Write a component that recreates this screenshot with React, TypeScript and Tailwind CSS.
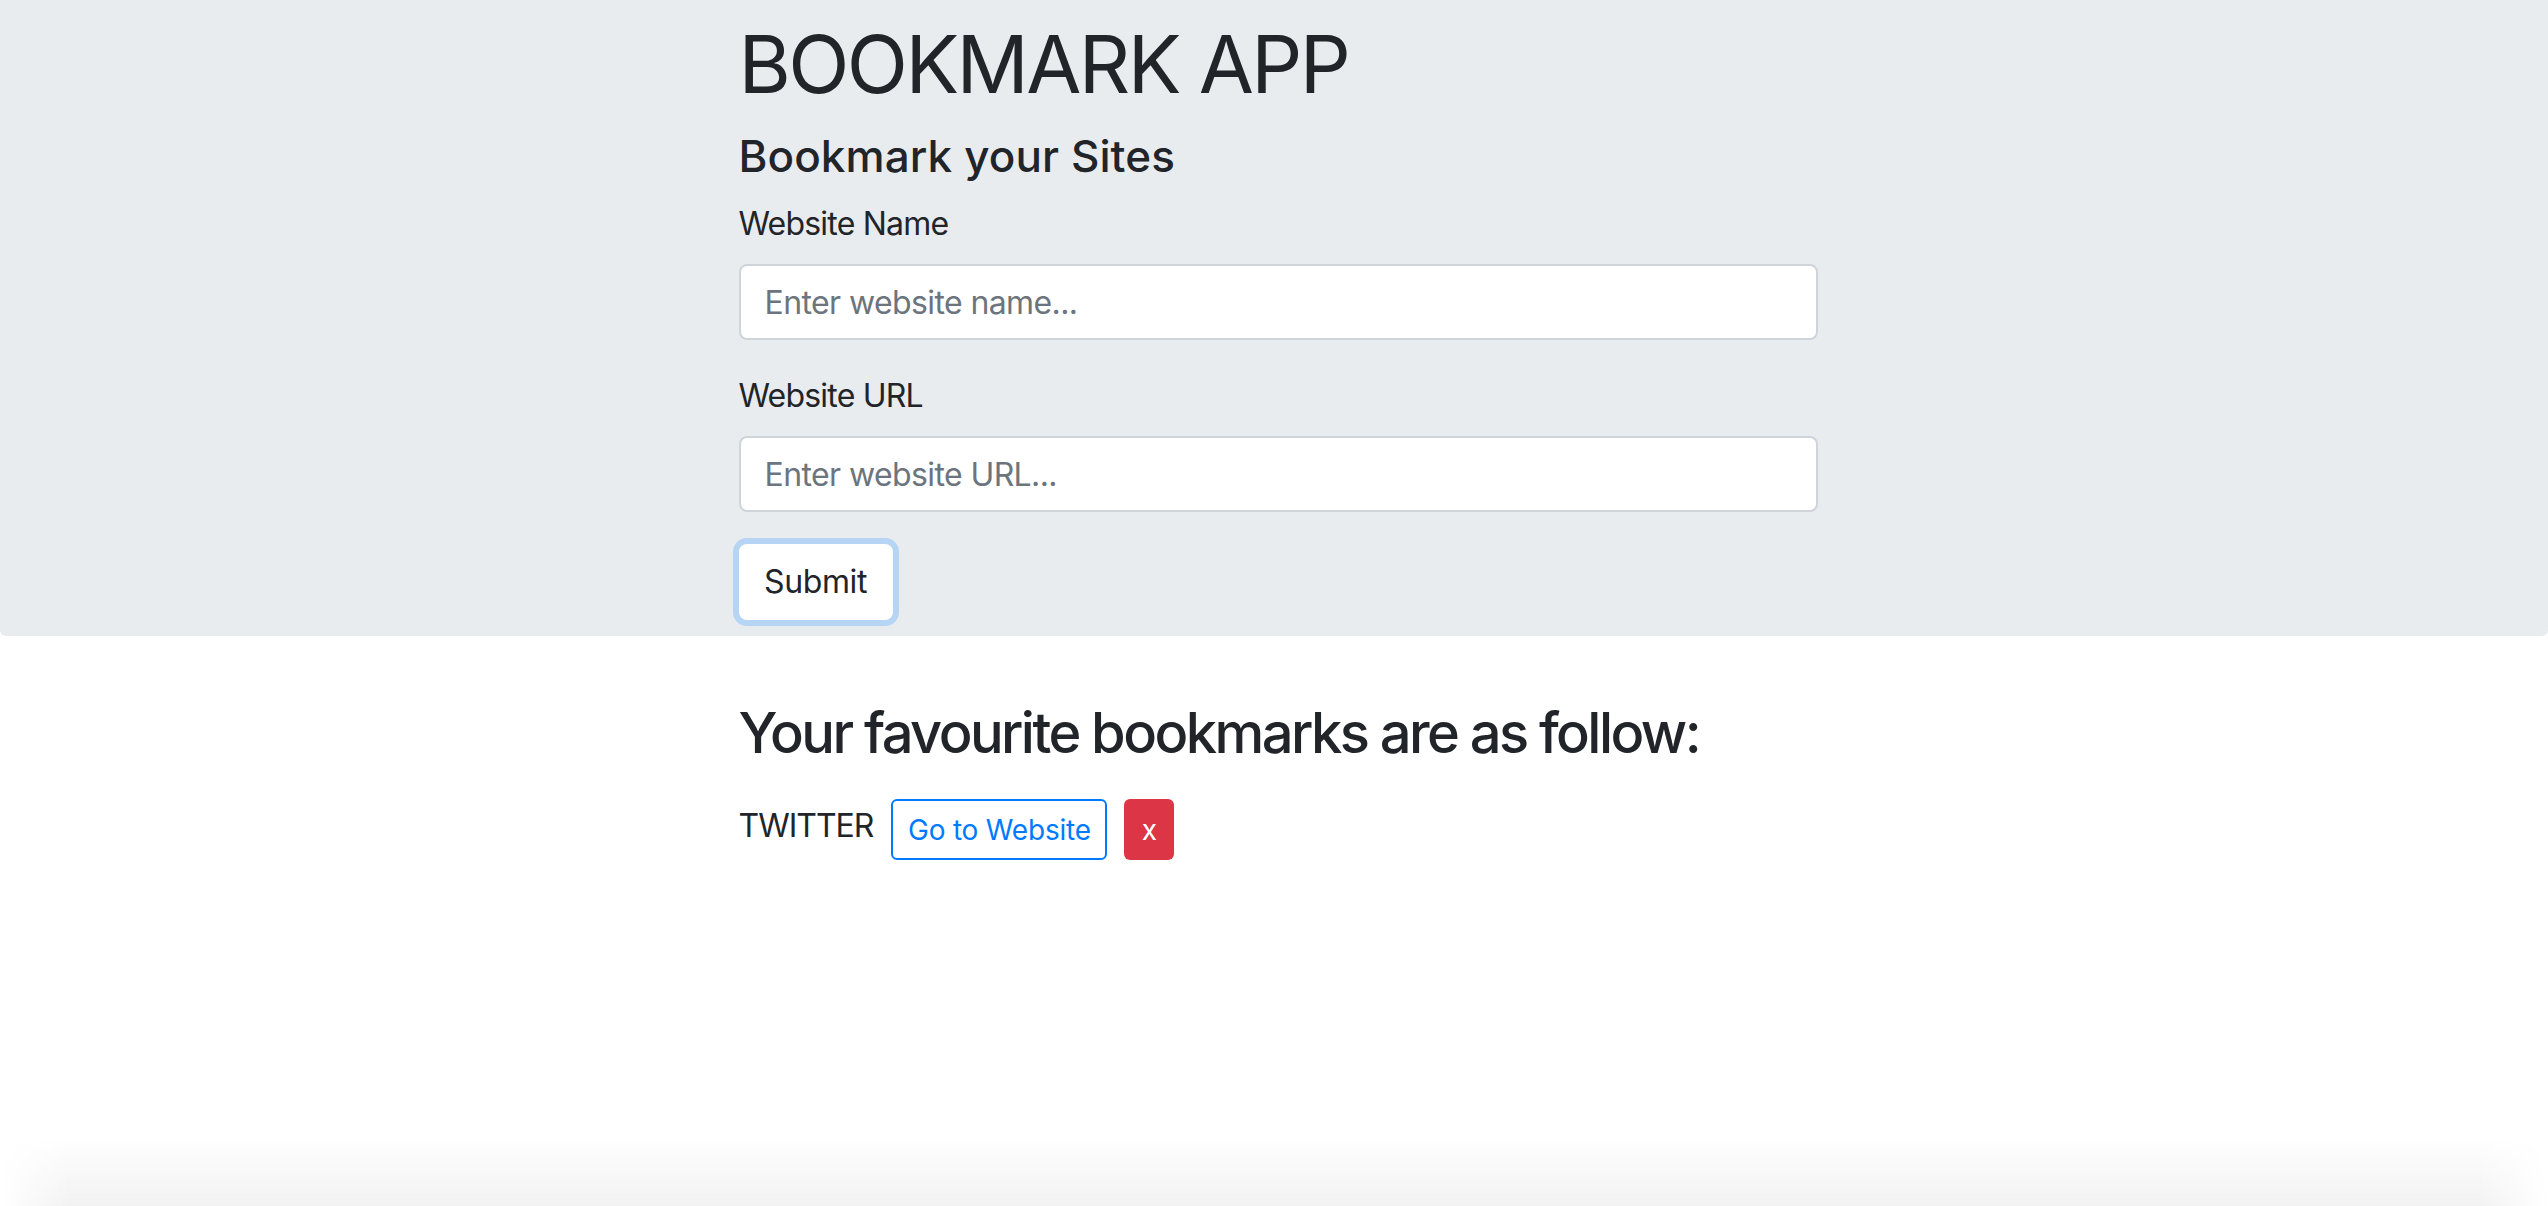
import React from "react";

const font = "font-['Inter','Roboto','Liberation_Sans',sans-serif]";

export default function App() {
  return (
    <div className={`h-[1206px] overflow-hidden flex flex-col bg-white text-[#212529] ${font}`}>
      <div className="bg-[#e9ecef] rounded-b-[6px] pb-[16px]">
        <div className="mx-auto w-[1087px] pl-[8px]">
          <h1 className="pt-[16px] text-[80px] leading-[96px] font-normal tracking-[-2.6px]">BOOKMARK APP</h1>
          <h4 className="mt-[18px] text-[44px] leading-[53px] font-medium tracking-[0.1px]">Bookmark your Sites</h4>
          <form className="mt-[17px]" onSubmit={(e) => e.preventDefault()}>
            <div className="mb-[32px]">
              <label className="block text-[32px] leading-[48px] mb-[16px] tracking-[-0.8px]">Website Name</label>
              <input
                className="block w-[1079px] h-[76px] bg-white border-2 border-[#ced4da] rounded-[8px] px-[24px] text-[32px] tracking-[-0.6px] text-[#495057] placeholder:text-[#6c757d] outline-none"
                placeholder="Enter website name..."
              />
            </div>
            <div className="mb-[32px]">
              <label className="block text-[32px] leading-[48px] mb-[16px] tracking-[-0.8px]">Website URL</label>
              <input
                className="block w-[1079px] h-[76px] bg-white border-2 border-[#ced4da] rounded-[8px] px-[24px] text-[32px] tracking-[-0.6px] text-[#495057] placeholder:text-[#6c757d] outline-none"
                placeholder="Enter website URL..."
              />
            </div>
            <button
              type="submit"
              className="h-[76px] w-[154px] bg-white rounded-[8px] text-[32px] tracking-[-0.4px] text-[#212529] shadow-[0_0_0_6px_#b6d4f3] flex items-center justify-center"
            >
              Submit
            </button>
          </form>
        </div>
      </div>

      <div className="mx-auto w-[1087px] pl-[8px] mt-[64px]">
        <h3 className="text-[56px] leading-[67px] font-medium tracking-[-2.55px]">Your favourite bookmarks are as follow:</h3>
        <div className="mt-[32px] flex items-start">
          <span className="text-[32px] leading-[48px] mt-[3px] tracking-[-1px]">TWITTER</span>
          <a className="ml-[18px] h-[61px] w-[216px] border-2 border-[#007bff] rounded-[6px] text-[#007bff] text-[28px] tracking-[-0.2px] flex items-center justify-center">
            Go to Website
          </a>
          <button className="ml-[17px] h-[61px] w-[50px] bg-[#dc3545] rounded-[6px] text-white text-[28px] flex items-center justify-center">
            x
          </button>
        </div>
      </div>

      <div className="mt-auto h-[70px] bg-[linear-gradient(to_bottom,rgba(0,0,0,0),rgba(0,0,0,0.05))] [mask-image:linear-gradient(to_right,transparent,black_70px,black_calc(100%-70px),transparent)]" />
    </div>
  );
}
